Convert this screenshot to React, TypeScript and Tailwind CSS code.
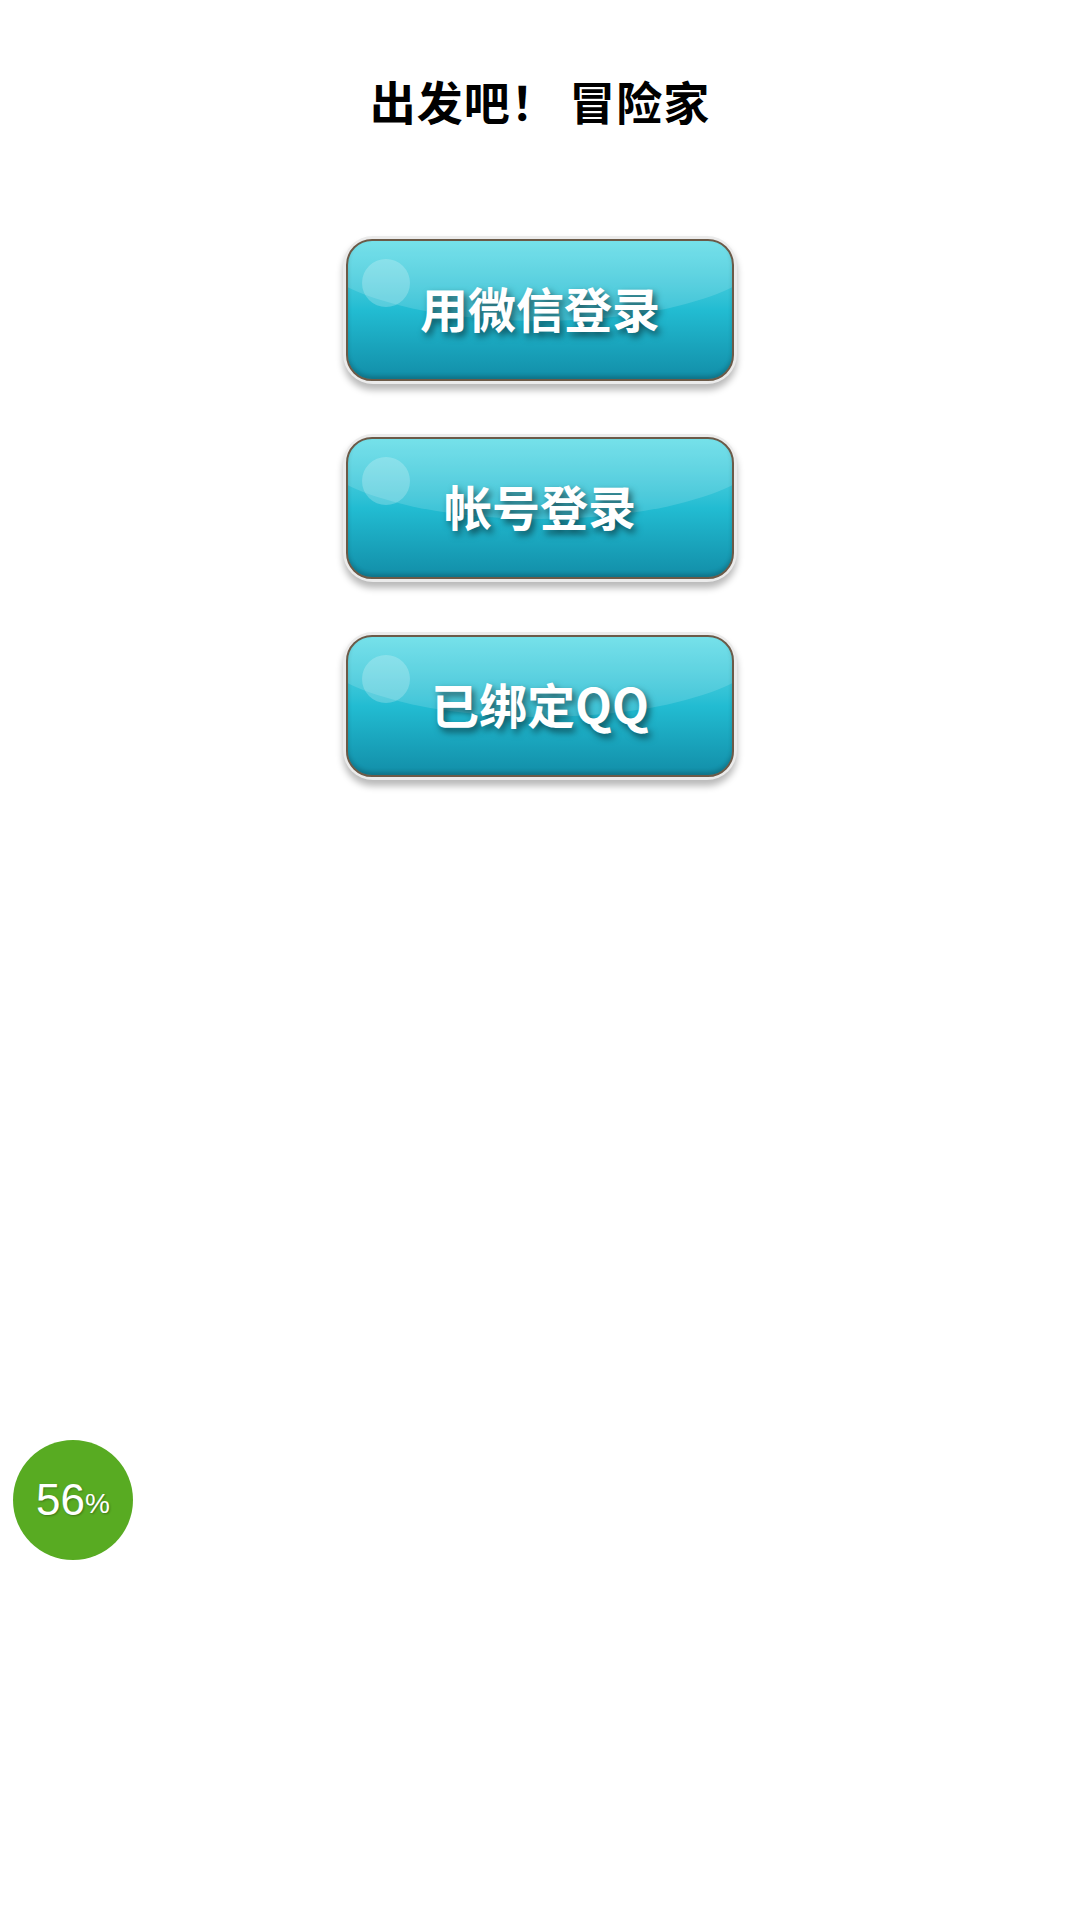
import React from 'react';

const buttons = ['用微信登录', '帐号登录', '已绑定QQ'];

const GlossyButton: React.FC<{ label: string }> = ({ label }) => {
  return (
    <div className="rounded-[30px] p-[3px] bg-[#ebebeb] shadow-[0_6px_7px_rgba(0,0,0,0.28)]">
      <button className="relative w-[388px] h-[142px] rounded-[26px] border-2 border-[#6b5a48] overflow-hidden bg-gradient-to-b from-[#5fdce7] via-[#22bcd2] to-[#128ea8] shadow-[inset_0_-3px_4px_rgba(0,0,0,0.2)]">
        <div className="absolute left-[-10%] top-[-70px] w-[120%] h-[150px] rounded-[50%] bg-[rgba(255,255,255,0.14)]" />
        <div className="absolute left-[14px] top-[18px] w-[48px] h-[48px] rounded-full bg-[rgba(255,255,255,0.22)]" />
        <span className="relative -top-[2px] text-white font-bold text-[48px] leading-none [text-shadow:3px_4px_7px_rgba(0,0,0,0.55)]">
          {label}
        </span>
      </button>
    </div>
  );
};

export default function App() {
  return (
    <div className="relative w-[1080px] h-[1920px] bg-white font-['Noto_Sans_CJK_SC','Noto_Sans',sans-serif]">
      <div className="flex flex-col items-center">
        <h1 className="mt-[77px] text-[46px] font-bold text-black leading-none tracking-[1px]">出发吧！ 冒险家</h1>
        <div className="mt-[113px] flex flex-col items-center gap-[50px]">
          {buttons.map((b) => (
            <GlossyButton key={b} label={b} />
          ))}
        </div>
      </div>
      <div className="absolute left-[13px] top-[1440px] w-[120px] h-[120px] rounded-full bg-[#58ab22] flex items-center justify-center text-white font-['Liberation_Sans',sans-serif] [text-shadow:1px_1px_2px_rgba(0,0,0,0.3)]">
        <span className="text-[44px] leading-none">56</span>
        <span className="text-[28px] leading-none mt-[8px]">%</span>
      </div>
    </div>
  );
}
